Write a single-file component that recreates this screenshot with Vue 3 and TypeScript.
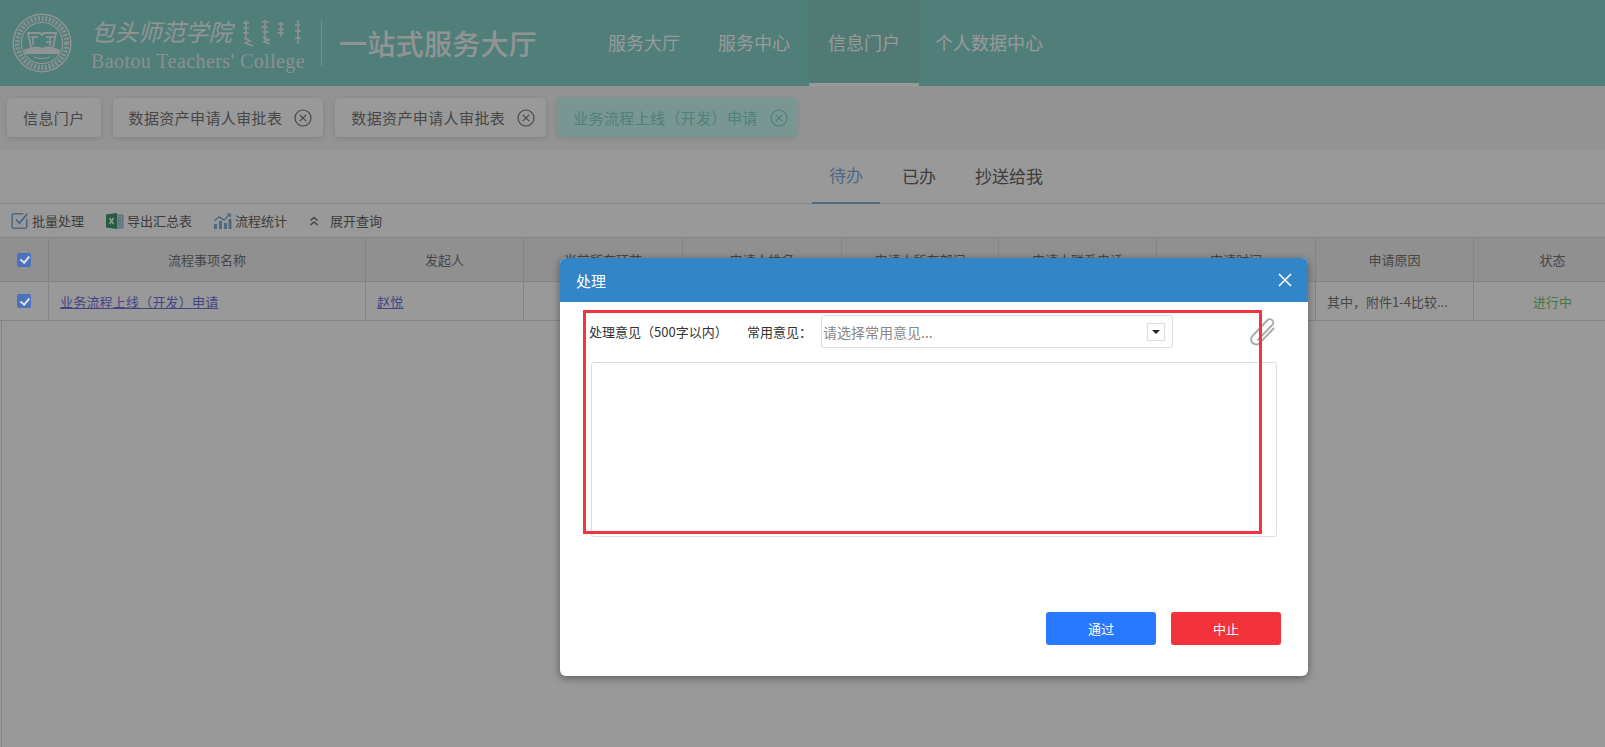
<template>
  <div class="page">
    <!-- 顶部导航 -->
    <header class="top-bar">
      <div class="brand">
        <svg class="emblem" viewBox="0 0 60 60" width="60" height="60" aria-hidden="true">
          <circle cx="30" cy="30" r="28.8" fill="none" stroke="#f4f7f6" stroke-width="1.4" />
          <circle cx="30" cy="30" r="24.6" fill="none" stroke="#f4f7f6" stroke-width="5" stroke-dasharray="2.2 1.5" opacity=".8" />
          <circle cx="30" cy="30" r="20.6" fill="none" stroke="#f4f7f6" stroke-width="1.2" />
          <path d="M12 37c6-3 12-3 18 0 6-3 12-3 18 0l-1 4H13z" fill="#f4f7f6" />
          <path d="M16 20h12l2 2 2-2h12l-3 15c-4-1-8-1-11 1-3-2-7-2-11-1z" fill="none" stroke="#f4f7f6" stroke-width="1.8" />
          <path d="M19 24h7M21 24v8M34 24h8M38 24v9M34 29h6" fill="none" stroke="#f4f7f6" stroke-width="1.6" />
          <path d="M22 44c5 2 11 2 16 0" fill="none" stroke="#f4f7f6" stroke-width="1" />
        </svg>
        <div class="school">
          <div class="school-top">
            <span class="school-cn">包头师范学院</span>
            <svg class="school-mark" viewBox="0 0 60 30" width="60" height="30" aria-hidden="true">
              <g fill="none" stroke="#f0f4f3" stroke-width="1.5">
                <path d="M4 2v20M1 5h6M1 10h6M1 15h6M2 20l6 3-5 2 8 3" />
                <path d="M23 2v20M20 4h7M19 9h7M20 14h7M21 19l6 3-5 2 6 2" />
                <path d="M39 4v15M36 6h6M36 11h6M35 15h7" />
                <path d="M56 2v24M53 7h5M53 13h6M53 20h6" />
              </g>
            </svg>
          </div>
          <div class="school-en">Baotou Teachers' College</div>
        </div>
        <span class="brand-line"></span>
        <span class="brand-title">一站式服务大厅</span>
      </div>
      <nav class="nav">
        <a v-for="n in navItems" :key="n" class="nav-item" :class="{ active: n === '信息门户' }">{{ n }}</a>
      </nav>
    </header>

    <!-- 已打开的标签 -->
    <div class="tag-bar">
      <div
        v-for="t in openTags"
        :key="t.id"
        class="tag"
        :class="{ current: t.current, closable: t.closable }"
      >
        <span>{{ t.label }}</span>
        <svg v-if="t.closable" class="tag-close" viewBox="0 0 18 18" width="18" height="18" aria-hidden="true">
          <circle cx="9" cy="9" r="8" fill="none" stroke="currentColor" stroke-width="1.2" />
          <path d="M5.8 5.8l6.4 6.4M12.2 5.8l-6.4 6.4" fill="none" stroke="currentColor" stroke-width="1.2" />
        </svg>
      </div>
    </div>

    <main class="content">
      <div class="state-tabs">
        <a v-for="s in stateTabs" :key="s" class="state-tab" :class="{ active: s === '待办' }">{{ s }}</a>
      </div>

      <div class="toolbar">
        <span class="tool">
          <svg viewBox="1 2 16 16" width="18" height="18" aria-hidden="true">
            <path d="M15 8v7a1.5 1.5 0 0 1-1.5 1.5h-10A1.5 1.5 0 0 1 2 15V5a1.5 1.5 0 0 1 1.5-1.500H12" fill="none" stroke="#83add6" stroke-width="1.400" />
            <path d="M5.500 8.500l3 3.500 7-8.500" fill="none" stroke="#83add6" stroke-width="1.600" />
          </svg>
          批量处理
        </span>
        <span class="tool">
          <svg viewBox="0 0 19 18" width="19" height="18" aria-hidden="true">
            <path d="M11 3h7v13h-7z" fill="#c5d6e6" stroke="#8fb0cf" />
            <path d="M13 6h3M13 9h3M13 12h3" stroke="#7f9fbf" />
            <path d="M1 2.500l11-1.500v16l-11-1.500z" fill="#3f9a6d" />
            <path d="M4.500 6l4 6M8.500 6l-4 6" stroke="#fff" stroke-width="1.400" />
          </svg>
          导出汇总表
        </span>
        <span class="tool">
          <svg viewBox="0 0 19 18" width="19" height="18" aria-hidden="true">
            <path d="M1 12h3v5H1zM6 9h3v8H6zM11 11h3v6h-3zM15.500 7h3v10h-3z" fill="#83add6" />
            <path d="M1 9l5-4 5 3 5-5" fill="none" stroke="#83add6" stroke-width="1.500" />
            <path d="M13.500 1.500h4.500v4.500z" fill="#83add6" />
          </svg>
          流程统计
        </span>
        <span class="tool expand">
          <svg viewBox="0 0 12 12" width="12" height="12" aria-hidden="true">
            <path d="M2.500 5.500L6 2.500l3.500 3M2.500 10L6 7l3.500 3" fill="none" stroke="#777" stroke-width="1.600" />
          </svg>
          展开查询
        </span>
      </div>

      <div class="grid-row grid-head">
        <div class="cell"><span class="check"></span></div>
        <div v-for="c in columns" :key="c" class="cell">{{ c }}</div>
      </div>
      <div class="grid-row">
        <div class="cell"><span class="check"></span></div>
        <div class="cell left"><a class="link">业务流程上线（开发）申请</a></div>
        <div class="cell left"><a class="link">赵悦</a></div>
        <div v-for="i in 5" :key="i" class="cell"></div>
        <div class="cell left">其中，附件1-4比较...</div>
        <div class="cell running">进行中</div>
      </div>
      <div class="grid-rest"></div>
    </main>

    <!-- 遮罩和处理弹窗 -->
    <div class="mask"></div>
    <div class="dialog">
      <div class="dialog-head">
        <span>处理</span>
        <svg viewBox="0 0 16 16" width="16" height="16" aria-hidden="true">
          <path d="M2 2l12 12M14 2L2 14" fill="none" stroke="#fff" stroke-width="1.500" />
        </svg>
      </div>
      <div class="dialog-body">
        <div class="opinion-row">
          <span class="opinion-label">处理意见（500字以内）</span>
          <span class="opinion-label common">常用意见：</span>
          <div class="select">
            <span>请选择常用意见...</span>
            <span class="select-arrow"></span>
          </div>
          <svg class="clip" viewBox="0 0 24 24" width="34" height="34" aria-hidden="true">
            <path d="M20.500 8.500l-10 10.500a3.600 3.600 0 0 1-5.200-5l10.500-11a2.400 2.400 0 0 1 3.500 3.300L8.700 17.200" fill="none" stroke="#aaa" stroke-width="1.400" />
          </svg>
        </div>
        <div class="opinion-box"></div>
        <div class="actions">
          <button class="btn pass">通过</button>
          <button class="btn stop">中止</button>
        </div>
      </div>
      <div class="highlight"></div>
    </div>
  </div>
</template>

<script setup lang="ts">
interface OpenTag {
  id: number;
  label: string;
  closable: boolean;
  current?: boolean;
}

const navItems = ['服务大厅', '服务中心', '信息门户', '个人数据中心'];
const stateTabs = ['待办', '已办', '抄送给我'];

const openTags: OpenTag[] = [
  { id: 1, label: '信息门户', closable: false },
  { id: 2, label: '数据资产申请人审批表', closable: true },
  { id: 3, label: '数据资产申请人审批表', closable: true },
  { id: 4, label: '业务流程上线（开发）申请', closable: true, current: true },
];

const columns = [
  '流程事项名称', '发起人', '当前所在环节', '申请人姓名', '申请人所在部门',
  '申请人联系电话', '申请时间', '申请原因', '状态',
];
</script>

<style>
html, body { margin: 0; background: #fff; overflow: hidden; }
</style>

<style scoped>
.page {
  position: relative; height: 747px; overflow: hidden; background: #fff;
  font-family: "Noto Sans CJK SC", "Noto Sans", sans-serif; font-size: 13px; color: #777;
}

.top-bar { display: flex; height: 86px; background: #86d3ca; }
.brand { display: flex; align-items: center; width: 589px; padding-left: 12px; box-sizing: border-box; color: #f4f7f6; }
.emblem { flex: none; }
.school { margin-left: 19px; width: 214px; }
.school-top { display: flex; align-items: center; height: 34px; }
.school-cn { font-size: 23.500px; line-height: 30px; font-style: italic; width: 151px; white-space: nowrap; }
.school-mark { margin-top: 4px; }
.school-en {
  font-family: "Liberation Serif", serif; font-size: 20px; line-height: 24px;
  letter-spacing: .42px; white-space: nowrap; margin-top: 1px; opacity: .85;
}
.brand-line { width: 1px; height: 46px; background: rgba(255,255,255,.6); margin-left: 16px; }
.brand-title { font-size: 28px; font-weight: 500; letter-spacing: .3px; margin-left: 17px; white-space: nowrap; }
.nav { display: flex; }
.nav-item {
  display: flex; align-items: center; padding: 0 19px; font-size: 18px; color: #fff;
  box-sizing: border-box; border-bottom: 3px solid transparent;
}
.nav-item.active { background: rgba(150,150,150,.12); border-bottom-color: #fff; }
.nav-item:last-child { padding-left: 16px; }

.tag-bar { display: flex; gap: 12px; height: 64px; padding: 12px 7px 0; box-sizing: border-box; background: #f6f6f6; }
.tag {
  display: flex; align-items: center; gap: 12px; height: 39px; padding: 0 16px; box-sizing: border-box;
  background: #fff; border-radius: 4px; box-shadow: 0 1px 6px rgba(0,0,0,.12);
  font-size: 15px; letter-spacing: .38px; color: #777; white-space: nowrap;
}
.tag.closable { padding-right: 11px; }
.tag.current { background: #c9fbf4; color: #85d5cb; padding-right: 9px; margin-left: -1px; }
.tag-close { flex: none; }

.state-tabs { display: flex; gap: 5px; height: 54px; padding-left: 812px; border-bottom: 1px solid #ddd; box-sizing: border-box; }
.state-tab { display: flex; align-items: center; padding: 0 17px 3px; font-size: 17px; color: #666; box-sizing: border-box; height: 54px; }
.state-tab.active { color: #85b0de; border-bottom: 2px solid #85b0de; }

.toolbar { display: flex; align-items: center; height: 33px; padding-left: 11px; color: #666; }
.tool { display: flex; align-items: center; gap: 3px; margin-right: 21px; white-space: nowrap; }
.expand { gap: 10px; }

/* 最后一列超出页面宽度，被裁掉一截 */
.grid-row {
  display: grid; grid-template-columns: 49px 317px 158px 159px 159px 157px 158px 159px 158px 158px;
  width: 1632px; height: 38px; border-bottom: 1px solid #ddd;
}
.grid-head { height: 45px; background: #f0f0f0; border-top: 1px solid #ddd; box-sizing: border-box; }
.grid-rest { height: 430px; border-left: 1px solid #ddd; margin-left: 1px; }
.cell { display: flex; align-items: center; justify-content: center; border-right: 1px solid #ddd; overflow: hidden; white-space: nowrap; }
.cell.left { justify-content: flex-start; padding-left: 11px; }
.check { position: relative; z-index: 1; width: 14px; height: 14px; border-radius: 2px; background: #4a72c0; }
.check::after {
  content: ""; position: absolute; left: 4.500px; top: 1.500px; width: 3.500px; height: 7px;
  border: solid #ddd; border-width: 0 2px 2px 0; transform: rotate(40deg);
}
.link { color: #7474dd; text-decoration: underline; letter-spacing: .2px; }
.running { color: #7ac46a; }

.mask { position: absolute; inset: 0; background: rgba(0,0,0,.4); }

.dialog {
  position: absolute; z-index: 2; left: 560px; top: 258px; width: 748px; background: #fff;
  border-radius: 6px; box-shadow: 0 2px 8px rgba(0,0,0,.4); overflow: hidden;
}
.dialog-head {
  display: flex; align-items: center; justify-content: space-between; height: 44px;
  padding: 0 15px 0 16px; background: #3285c6; color: #fff; font-size: 15px;
}
.dialog-body { padding: 13px 27px 31px 29px; color: #333; }
.opinion-row { display: flex; align-items: center; height: 33px; }
.opinion-label { font-size: 13px; white-space: nowrap; width: 134px; }
.opinion-label.common { width: auto; margin-left: 24px; margin-right: 9px; }
.select {
  position: relative; display: flex; align-items: center; flex: none; width: 352px; height: 33px; box-sizing: border-box;
  padding-left: 1px; border: 1px solid #ddd; border-radius: 3px; font-size: 14px; color: #888;
}
.select-arrow { position: absolute; right: 7px; top: 7px; width: 18px; height: 18px; box-sizing: border-box; border: 1px solid #ddd; }
.select-arrow::after {
  content: ""; position: absolute; left: 4px; top: 6px;
  border: 4px solid transparent; border-top: 4px solid #222; border-bottom: 0;
}
.clip { margin-left: 72px; margin-top: 3px; flex: none; }
.opinion-box { height: 175px; width: 686px; margin: 14px 0 0 2px; box-sizing: border-box; border: 1px solid #ddd; border-radius: 3px; }
.actions { display: flex; justify-content: flex-end; gap: 15px; margin-top: 75px; }
.btn { width: 110px; height: 33px; border: 0; border-radius: 3px; color: #fff; font: inherit; font-size: 13px; padding: 0; }
.btn.pass { background: #2979ff; }
.btn.stop { background: #f3333b; }

/* 红色标注框 */
.highlight {
  position: absolute; left: 23px; top: 52px; width: 679px; height: 224px;
  box-sizing: border-box; border: 3px solid #f5333f; pointer-events: none;
}
</style>
